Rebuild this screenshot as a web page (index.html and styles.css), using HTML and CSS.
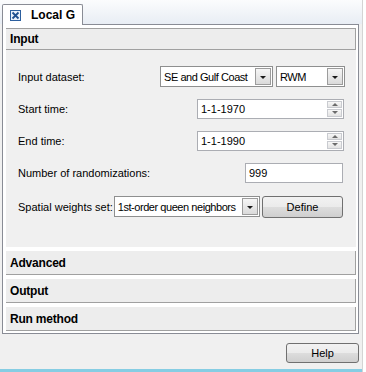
FILE: index.html
```html
<!DOCTYPE html>
<html>
<head>
<meta charset="utf-8">
<link rel="stylesheet" href="styles.css">
</head>
<body>
<div class="window">
  <div class="tabstrip">
    <div class="tab">
      <svg class="tab-icon" width="11" height="11" viewBox="0 0 11 11">
        <rect x="0.5" y="0.5" width="10" height="10" fill="#eaf1fb" stroke="#2c5f9e"/>
        <path d="M2.5 2.5 L8.5 8.5 M8.5 2.5 L2.5 8.5" stroke="#1f4f8f" stroke-width="1.8"/>
      </svg>
      <span class="tab-label">Local G</span>
    </div>
  </div>
  <div class="panel">
    <div class="hdr hdr-open">Input</div>
    <div class="body">
      <div class="row">
        <span class="lbl">Input dataset:</span>
        <div class="ctrls">
          <div class="combo c-ds"><span class="val">SE and Gulf Coast</span><span class="drop"></span></div>
          <div class="combo c-rwm"><span class="val">RWM</span><span class="drop"></span></div>
        </div>
      </div>
      <div class="row">
        <span class="lbl">Start time:</span>
        <div class="ctrls">
          <div class="date"><span class="val">1-1-1970</span><span class="spin"><span class="sp up"></span><span class="sp dn"></span></span></div>
        </div>
      </div>
      <div class="row">
        <span class="lbl">End time:</span>
        <div class="ctrls">
          <div class="date"><span class="val">1-1-1990</span><span class="spin"><span class="sp up"></span><span class="sp dn"></span></span></div>
        </div>
      </div>
      <div class="row">
        <span class="lbl">Number of randomizations:</span>
        <div class="ctrls">
          <div class="text"><span class="val">999</span></div>
        </div>
      </div>
      <div class="row row-last">
        <span class="lbl">Spatial weights set:</span>
        <div class="combo c-w"><span class="val">1st-order queen neighbors</span><span class="drop"></span></div>
        <div class="ctrls">
          <div class="btn define">Define</div>
        </div>
      </div>
    </div>
    <div class="hdr">Advanced</div>
    <div class="hdr">Output</div>
    <div class="hdr">Run method</div>
  </div>
  <div class="footer">
    <div class="btn help">Help</div>
  </div>
</div>
</body>
</html>
```

FILE: styles.css
```css
html, body {
  margin: 0;
  padding: 0;
  background: #ffffff;
}
body {
  font-family: "Liberation Sans", Arial, sans-serif;
  font-size: 11px;
  color: #000;
}
.window {
  width: 363px;
  height: 372px;
  display: flex;
  flex-direction: column;
  background: #f0f0f0;
  border-right: 1px solid #d4d4d4;
  box-sizing: border-box;
}
.tabstrip {
  height: 24px;
  flex: none;
  display: flex;
  align-items: flex-end;
  padding-left: 2px;
  background: linear-gradient(#fbfcfd, #e8edf4);
}
.tab {
  position: relative;
  z-index: 1;
  width: 81px;
  height: 21px;
  margin-bottom: -1px;
  box-sizing: border-box;
  border: 1px solid #898c95;
  border-bottom: none;
  border-radius: 2px 2px 0 0;
  background: #ffffff;
  display: flex;
  align-items: center;
  padding-left: 7px;
}
.tab-icon { flex: none; }
.tab-label {
  margin-left: 10px;
  font-weight: bold;
  font-size: 12px;
}
.panel {
  width: 357px;
  margin-left: 2px;
  box-sizing: border-box;
  border: 1px solid #898c95;
  background: #ffffff;
  padding: 3px 2px 2px 3px;
}
.hdr {
  height: 24px;
  box-sizing: border-box;
  margin-top: 4px;
  border-right: 1px solid #a0a0a0;
  border-bottom: 1px solid #a0a0a0;
  background: #ededed;
  font-weight: bold;
  font-size: 12px;
  letter-spacing: -0.2px;
  padding-left: 4px;
  display: flex;
  align-items: center;
}
.hdr-open {
  margin-top: 0;
  height: 22px;
  border: 1px solid #a0a0a0;
  border-left: none;
}
.body {
  height: 197px;
  box-sizing: border-box;
  background: #f0f0f0;
  padding: 16px 11px 0 12px;
  display: flex;
  flex-direction: column;
  gap: 11px;
}
.row {
  height: 21px;
  display: flex;
  align-items: center;
}
.row-last {
  height: 23px;
  margin-top: 1px;
}
.lbl { white-space: nowrap; }
.ctrls {
  margin-left: auto;
  display: flex;
  align-items: center;
}
.combo {
  height: 21px;
  box-sizing: border-box;
  border: 1px solid #8e8f8f;
  background: #fff;
  display: flex;
  align-items: center;
  padding-left: 3px;
}
.combo .val {
  flex: 1;
  overflow: hidden;
  white-space: nowrap;
  letter-spacing: -0.45px;
}
.drop {
  flex: none;
  width: 16px;
  height: 17px;
  margin-right: 1px;
  box-sizing: border-box;
  border: 1px solid #9c9c9c;
  background: linear-gradient(#f6f6f6, #dadada);
  display: flex;
  align-items: center;
  justify-content: center;
}
.drop::after {
  content: "";
  border-left: 3px solid transparent;
  border-right: 3px solid transparent;
  border-top: 3px solid #1a1a1a;
  margin-top: 1px;
}
.c-ds { width: 113px; margin-right: 3px; }
.c-rwm { width: 69px; }
.c-w { width: 146px; margin-left: 1px; }
.date {
  width: 147px;
  height: 20px;
  margin-right: 1px;
  box-sizing: border-box;
  border: 1px solid #abadb3;
  background: #fff;
  display: flex;
  align-items: center;
  padding-left: 3px;
}
.date .val { flex: 1; }
.spin {
  width: 15px;
  height: 16px;
  margin-right: 1px;
  display: flex;
  flex-direction: column;
  gap: 1px;
}
.sp {
  flex: 1;
  box-sizing: border-box;
  border: 1px solid #c9cbd0;
  background: linear-gradient(#f7f7f7, #e3e3e3);
  display: flex;
  align-items: center;
  justify-content: center;
}
.sp.up::after {
  content: "";
  border-left: 3px solid transparent;
  border-right: 3px solid transparent;
  border-bottom: 3px solid #6b6b6b;
}
.sp.dn::after {
  content: "";
  border-left: 3px solid transparent;
  border-right: 3px solid transparent;
  border-top: 3px solid #6b6b6b;
}
.text {
  width: 98px;
  height: 20px;
  margin-right: 2px;
  box-sizing: border-box;
  border: 1px solid #abadb3;
  background: #fff;
  display: flex;
  align-items: center;
  padding-left: 3px;
}
.btn {
  box-sizing: border-box;
  border: 1px solid #707070;
  border-radius: 3px;
  background: linear-gradient(#f2f2f2 0%, #ebebeb 50%, #dddddd 51%, #cfcfcf 100%);
  display: flex;
  align-items: center;
  justify-content: center;
}
.define {
  width: 81px;
  height: 22px;
  margin-right: 2px;
}
.footer {
  flex: 1;
  display: flex;
  justify-content: flex-end;
  align-items: flex-start;
  padding: 9px 3px 0 0;
  border-bottom: 3px solid #86cde3;
}
.help {
  width: 73px;
  height: 20px;
}
```
